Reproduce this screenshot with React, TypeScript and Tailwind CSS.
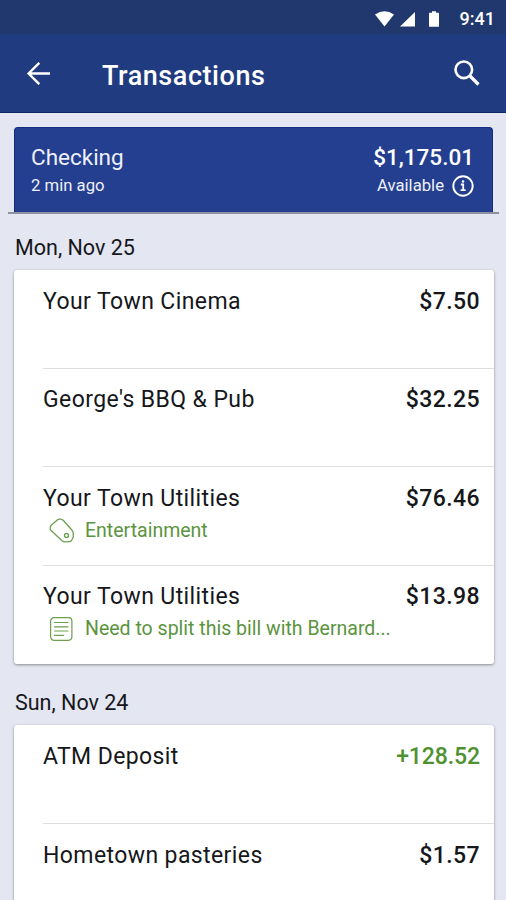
import { clsx } from "clsx";

type Transaction = {
  name: string;
  amount: string;
  credit?: boolean;
  category?: string;
  note?: string;
};

const november25: Transaction[] = [
  { name: "Your Town Cinema", amount: "$7.50" },
  { name: "George's BBQ & Pub", amount: "$32.25" },
  { name: "Your Town Utilities", amount: "$76.46", category: "Entertainment" },
  { name: "Your Town Utilities", amount: "$13.98", note: "Need to split this bill with Bernard..." },
];

const november24: Transaction[] = [
  { name: "ATM Deposit", amount: "+128.52", credit: true },
  { name: "Hometown pasteries", amount: "$1.57" },
];

function TagIcon() {
  return (
    <svg className="w-[26px] h-[26px]" viewBox="0 0 26 26" fill="none" stroke="#6c9f50" strokeWidth="1.3" strokeLinejoin="round">
      <path d="M1.2 9.6 L2 7.6 L8.600 1.8 Q10 0.800 11.600 1.200 L14 2 L23 12.2 Q24.200 13.600 24.300 15.500 V19 L22.600 22.300 Q21.800 23.600 20.300 23.600 L15.800 23.900 Q14.400 23.900 13 22.700 L1.900 12.3 Q0.900 11 1.200 9.600 Z" />
      <circle cx="17.500" cy="17.500" r="2" />
    </svg>
  );
}

function NoteIcon() {
  return (
    <svg className="w-[26px] h-[26px]" viewBox="0 0 26 26" fill="none" stroke="#6c9f50" strokeWidth="1.2" strokeLinecap="round">
      <rect x="1.6" y="1.7" width="21.3" height="22.6" rx="3.5" />
      <path d="M5.5 6.5h13.5M5.5 10.8h13.5M5.5 15h13.5M5.5 19.3h9" />
    </svg>
  );
}

function StatusBar() {
  return (
    <div className="h-[34px] pt-1 bg-[#21386f] flex items-center justify-end pr-[11px]">
      <svg className="w-[66px] h-5 mr-[19px]" viewBox="0 0 66 20" fill="#fff">
        <path d="M0 5.5 Q9.5 -1 19 5.5 L9.5 17.500 Z" />
        <path d="M40 3 V17.500 H25 Z" />
        <path d="M56 3.700 H57 V2.200 H61 V3.700 H63.500 Q64 3.700 64 4.500 V17 Q64 17.700 63.500 17.700 H54.500 Q54 17.700 54 17 V4.500 Q54 3.700 54.500 3.700 Z" />
      </svg>
      <span className="text-[18px] leading-5 text-white font-medium">9:41</span>
    </div>
  );
}

function Header() {
  return (
    <header className="h-[79px] bg-[#203b7f] border-b border-[#0e2468] flex items-center pl-[26px] pr-[25px]">
      <svg className="w-6 h-6" viewBox="0 0 24 24" fill="none" stroke="#fff" strokeWidth="2.4">
        <path d="M24 12.500H3M13.300 1.800 2.600 12.500l10.700 10.700" />
      </svg>
      <h1 className="ml-[52px] mt-[5px] text-[27px] leading-8 tracking-[0.55px] font-medium text-white">Transactions</h1>
      <svg className="ml-auto w-[27px] h-[27px]" viewBox="0 0 27 27" fill="none" stroke="#fff">
        <circle cx="9.800" cy="9.800" r="8.300" strokeWidth="2.600" />
        <path d="M16 16 24.500 24.500" strokeWidth="3.200" />
      </svg>
    </header>
  );
}

function AccountCard() {
  return (
    <section className="ml-2 mr-[7px] mt-3.5 px-1.5 border-b-2 border-[#8c91a3]">
      <div className="h-[85px] rounded-t bg-[#243f90] border border-b-0 border-[#152b82] pl-4 pr-[18px] pt-3.5 flex justify-between text-white">
        <div>
          <p className="text-[22.5px] leading-[30px] text-[#edf0fa]">Checking</p>
          <p className="mt-px text-[16.7px] leading-[26px] text-[#edf0fa]">2 min ago</p>
        </div>
        <div className="flex flex-col items-end">
          <p className="text-[22.5px] leading-[30px] font-medium">$1,175.01</p>
          <p className="mt-px flex items-center gap-2 text-[16.7px] leading-[26px] text-[#edf0fa]">
            Available
            <svg className="w-[22px] h-[22px]" viewBox="0 0 22 22" fill="none" stroke="#fff">
              <circle cx="11" cy="11" r="9.700" strokeWidth="1.900" />
              <path d="M8.800 9.500H11.200V15M8.600 15.200h5" strokeWidth="1.800" />
              <circle cx="11" cy="6.500" r="1.300" fill="#fff" stroke="none" />
            </svg>
          </p>
        </div>
      </div>
    </section>
  );
}

function TransactionRow({ item }: { item: Transaction }) {
  const detail = item.category || item.note;

  return (
    <li className="h-[98.6px] pt-[16.6px] pr-3.5 border-b border-[#dedfe2] last:border-b-0">
      <div className="flex justify-between text-[23px] leading-[30px]">
        <span className="tracking-[0.4px] text-[#15171b]">{item.name}</span>
        <span className={clsx("font-medium", item.credit ? "tracking-[-0.1px] text-[#4f9131]" : "tracking-[0.4px] text-[#15171b]")}>
          {item.amount}
        </span>
      </div>
      {detail && (
        <div className="mt-0.5 pl-1.5 flex items-center gap-[10px] text-[19.5px] leading-[30px] text-[#5b9440]">
          {item.category ? <TagIcon /> : <NoteIcon />}
          <span>{detail}</span>
        </div>
      )}
    </li>
  );
}

function DayGroup({ date, items }: { date: string; items: Transaction[] }) {
  return (
    <section className="mb-[23px]">
      <h2 className="ml-[15px] text-[21.5px] leading-8 mb-1.5 text-[#15171b]">{date}</h2>
      <ul className="ml-3.5 mr-3 pl-[29px] bg-white rounded-[3px] shadow-[0_1px_3px_rgba(0,0,0,0.4)]">
        {items.map((item, i) => (
          <TransactionRow key={i} item={item} />
        ))}
      </ul>
    </section>
  );
}

export default function App() {
  return (
    <div className="w-full h-[900px] overflow-hidden bg-[#e4e6f1] font-['Roboto',sans-serif]">
      <StatusBar />
      <Header />
      <AccountCard />
      <main className="pt-[18px]">
        <DayGroup date="Mon, Nov 25" items={november25} />
        <DayGroup date="Sun, Nov 24" items={november24} />
      </main>
    </div>
  );
}
